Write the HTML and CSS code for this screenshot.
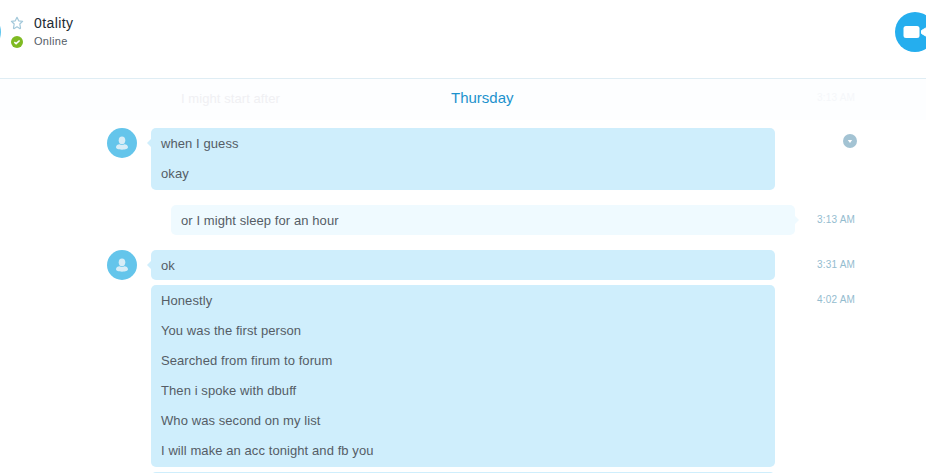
FILE: index.html
```html
<!DOCTYPE html>
<html lang="en">
<head>
    <meta charset="UTF-8">
    <title>0tality</title>
    <link rel="stylesheet" href="styles.css">
</head>
<body>
<svg width="0" height="0" class="defs">
    <symbol id="person" viewBox="0 0 30 30">
        <ellipse cx="15" cy="12.300" rx="3.300" ry="3.900"/>
        <path d="M9 19.300c0-2 1.700-3 3.600-3 1.500 1 3.300 1 4.800 0 1.900 0 3.600 1 3.600 3 0 1.700-2.500 2.400-6 2.400s-6-.7-6-2.400z"/>
    </symbol>
</svg>

<header class="header">
    <div class="header-avatar"></div>
    <div class="contact">
        <div class="contact-row">
            <svg class="icon" width="14" height="14" viewBox="0 0 14 14">
                <path class="star" d="M7 1.300l1.700 3.500 3.900.5-2.800 2.700.7 3.900c.1.600-.3.800-.8.500L7 10.800l-2.700 1.600c-.5.300-.9.100-.8-.5L4.200 8 1.400 5.300l3.900-.5z"/>
            </svg>
            <span class="name">0tality</span>
        </div>
        <div class="contact-row">
            <svg class="icon" width="14" height="14" viewBox="0 0 14 14">
                <circle cx="7" cy="8" r="6" fill="#7fba22"/>
                <path class="check" d="M4.300 8.200l1.800 1.400 3.500-3.100"/>
            </svg>
            <span class="status">Online</span>
        </div>
    </div>
    <div class="call">
        <svg width="40" height="40" viewBox="0 0 40 40">
            <circle cx="20" cy="20" r="20" fill="#25aeee"/>
            <rect x="8.500" y="14" width="16" height="12" rx="2.500" fill="#fff"/>
            <path d="M26.500 18.500l6-3.500v10l-6-3.500z" fill="#fff" stroke="#fff" stroke-linejoin="round"/>
        </svg>
    </div>
</header>

<div class="day">
    <span class="faded">I might start after</span>
    <span class="day-name">Thursday</span>
    <span class="faded-time">3:13 AM</span>
</div>

<main class="chat">
    <div class="row">
        <div class="avatar"><svg width="30" height="30"><use href="#person"/></svg></div>
        <div class="bubble tail multi">
            <p>when I guess</p>
            <p>okay</p>
        </div>
        <div class="time">
            <svg class="menu" width="14" height="14" viewBox="0 0 14 14">
                <circle cx="7" cy="7" r="7" fill="#a3c3d3"/>
                <path d="M4.800 6h4.400L7 8.900z" fill="#fff"/>
            </svg>
        </div>
    </div>
    <div class="row mine">
        <div class="bubble"><p>or I might sleep for an hour</p></div>
        <div class="time">3:13 AM</div>
    </div>
    <div class="row">
        <div class="avatar"><svg width="30" height="30"><use href="#person"/></svg></div>
        <div class="bubble tail"><p>ok</p></div>
        <div class="time">3:31 AM</div>
    </div>
    <div class="row next">
        <div class="bubble multi">
            <p>Honestly</p>
            <p>You was the first person</p>
            <p>Searched from firum to forum</p>
            <p>Then i spoke with dbuff</p>
            <p>Who was second on my list</p>
            <p>I will make an acc tonight and fb you</p>
        </div>
        <div class="time">4:02 AM</div>
    </div>
    <div class="row next cut">
        <div class="bubble"></div>
    </div>
</main>
</body>
</html>
```
FILE: styles.css
```css
* {
    box-sizing: border-box;
}

body {
    margin: 0;
    background-color: #fff;
    font-family: "Liberation Sans", Arial, sans-serif;
    font-size: 13px;
    color: #555d66;
}

p {
    margin: 0;
}

.defs {
    display: block;
}

.header {
    display: flex;
    height: 79px;
    border-bottom: 1px solid #dfedf4;
    overflow: hidden;
}

.header-avatar {
    width: 40px;
    height: 40px;
    margin: 12px 0 0 -39px;
    border-radius: 50%;
    background-color: #5fc6ee;
}

.contact {
    flex: 1;
    padding: 14px 0 0 9px;
}

.contact-row {
    display: flex;
    align-items: center;
    gap: 10px;
    height: 18px;
}

.star {
    fill: none;
    stroke: #a3c8da;
    stroke-width: 1.2;
    stroke-linejoin: round;
}

.check {
    fill: none;
    stroke: #fff;
    stroke-width: 1.6;
}

.name {
    font-size: 14px;
    letter-spacing: 0.4px;
    color: #222b33;
}

.status {
    font-size: 11px;
    letter-spacing: 0.3px;
}

.call {
    flex: none;
    width: 31px;
    height: 40px;
    margin-top: 12px;
    overflow: hidden;
}

.day {
    display: grid;
    grid-template-columns: 270px 366px 1fr;
    align-items: center;
    height: 41px;
    padding: 0 0 3px 181px;
    background-color: #fdfeff;
}

.day-name {
    padding-bottom: 2px;
    font-size: 15px;
    color: #1c92cd;
}

.faded {
    letter-spacing: 0.07px;
    color: #f0f0f3;
}

.faded-time {
    padding-bottom: 2px;
    font-size: 10px;
    letter-spacing: 0.2px;
    color: #f5f7fa;
}

.chat {
    height: 353px;
    padding: 8px 0 0 107px;
    overflow: hidden;
}

.row {
    display: grid;
    grid-template-columns: 44px 624px 42px 60px;
    margin-bottom: 15px;
}

.row.next {
    margin-top: -10px;
}

.avatar {
    width: 30px;
    height: 30px;
    border-radius: 50%;
    background-color: #64c5eb;
    fill: #d6edf7;
}

.avatar svg {
    display: block;
}

.bubble {
    position: relative;
    grid-column: 2;
    height: 30px;
    padding: 1px 10px 0;
    border-radius: 5px;
    background-color: #cfeefc;
    line-height: 30px;
    letter-spacing: 0.08px;
}

.multi {
    height: auto;
    padding-bottom: 1px;
}

/* only the top edge of the following message is visible */
.cut {
    height: 1px;
    margin-bottom: 0;
    overflow: hidden;
}

.mine .bubble {
    left: 20px;
    background-color: #effaff;
}

/* little arrow pointing at the sender */
.tail::before,
.mine .bubble::after {
    content: "";
    position: absolute;
    top: 10px;
    border: 5px solid transparent;
}

.tail::before {
    left: -9px;
    border-right-color: #cfeefc;
}

.mine .bubble::after {
    right: -9px;
    border-left-color: #effaff;
}

.time {
    grid-column: 4;
    font-size: 10px;
    line-height: 29px;
    letter-spacing: 0.2px;
    color: #94bccf;
}

.menu {
    display: block;
    margin: 6px 0 0 26px;
}
```
